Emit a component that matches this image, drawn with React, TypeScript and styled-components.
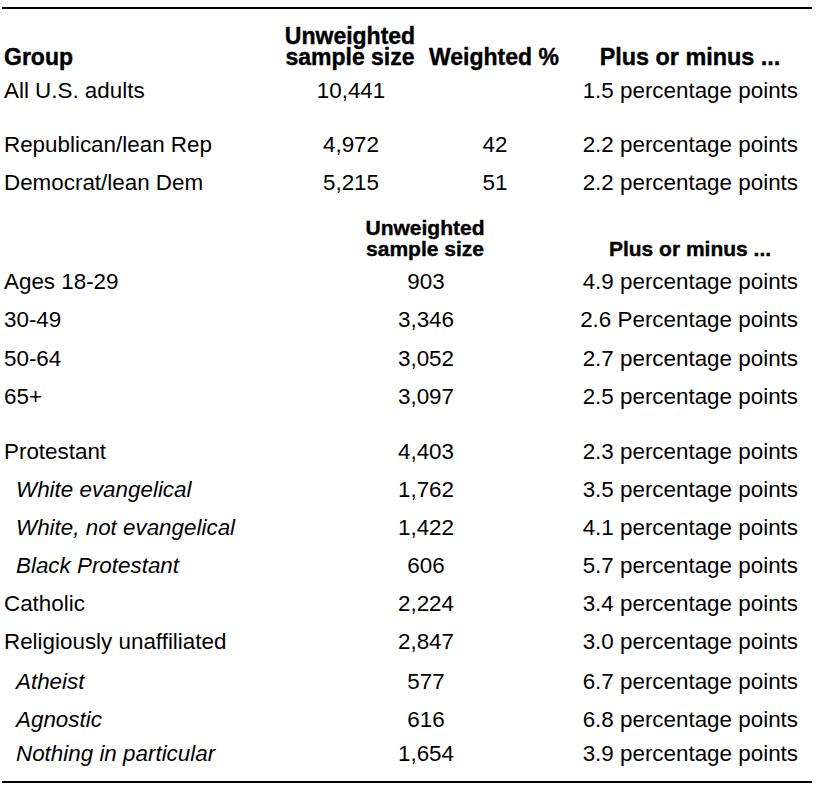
import React from "react";
import styled, { createGlobalStyle } from "styled-components";

const Global = createGlobalStyle`
  html, body { margin: 0; padding: 0; background: #ffffff; }
  body { font-family: "Liberation Sans", Arial, sans-serif; color: #000; }
`;

const Table = styled.div`
  width: 810px;
  margin: 7px 0 0 2px;
  border-top: 2px solid #000;
  border-bottom: 2px solid #000;
  padding-bottom: 8px;
`;

const Grid = styled.div<{ $cols: string }>`
  display: grid;
  grid-template-columns: ${(p) => p.$cols};
`;

const Head = styled.div<{ $size: number; $align?: string; $pt: number }>`
  font-weight: 700;
  font-size: ${(p) => p.$size}px;
  line-height: 21px;
  text-align: ${(p) => p.$align || "center"};
  padding: ${(p) => p.$pt}px 0 4px ${(p) => (p.$align === "left" ? 2 : 0)}px;
  display: flex;
  flex-direction: column;
  justify-content: flex-end;
  -webkit-text-stroke: 0.4px #000;
  white-space: nowrap;
`;

const Cell = styled.div<{ $align?: string; $italic?: boolean; $indent?: boolean; $gap?: number }>`
  font-size: 22.4px;
  line-height: 38px;
  height: 38px;
  margin-top: ${(p) => p.$gap || 0}px;
  text-align: ${(p) => p.$align || "center"};
  font-style: ${(p) => (p.$italic ? "italic" : "normal")};
  padding-left: ${(p) => (p.$indent ? 14 : 2)}px;
  padding-right: ${(p) => (p.$align === "right" ? 14 : 0)}px;
  white-space: nowrap;
  color: #000;
`;

type Row = { g: string; n: string; w?: string; pm: string; it?: boolean; gap?: number };

const top: Row[] = [
  { g: "All U.S. adults", n: "10,441", w: "", pm: "1.5 percentage points" },
  { g: "Republican/lean Rep", n: "4,972", w: "42", pm: "2.2 percentage points", gap: 16 },
  { g: "Democrat/lean Dem", n: "5,215", w: "51", pm: "2.2 percentage points" },
];

const bottom: Row[] = [
  { g: "Ages 18-29", n: "903", pm: "4.9 percentage points" },
  { g: "30-49", n: "3,346", pm: "2.6 Percentage points" },
  { g: "50-64", n: "3,052", pm: "2.7 percentage points", gap: 1 },
  { g: "65+", n: "3,097", pm: "2.5 percentage points" },
  { g: "Protestant", n: "4,403", pm: "2.3 percentage points", gap: 17 },
  { g: "White evangelical", n: "1,762", pm: "3.5 percentage points", it: true },
  { g: "White, not evangelical", n: "1,422", pm: "4.1 percentage points", it: true },
  { g: "Black Protestant", n: "606", pm: "5.7 percentage points", it: true },
  { g: "Catholic", n: "2,224", pm: "3.4 percentage points" },
  { g: "Religiously unaffiliated", n: "2,847", pm: "3.0 percentage points" },
  { g: "Atheist", n: "577", pm: "6.7 percentage points", it: true, gap: 2 },
  { g: "Agnostic", n: "616", pm: "6.8 percentage points", it: true },
  { g: "Nothing in particular", n: "1,654", pm: "3.9 percentage points", it: true, gap: -4 },
];

export default function App() {
  return (
    <>
      <Global />
      <Table>
        <Grid $cols="278px 140px 148px 244px">
          <Head $size={23} $align="left" $pt={17}>Group</Head>
          <Head $size={23} $pt={17}>
            <span>Unweighted</span>
            <span>sample size</span>
          </Head>
          <Head $size={23} $pt={17}>Weighted %</Head>
          <Head $size={23.4} $pt={17}>Plus or minus ...</Head>
          {top.map((r) => (
            <React.Fragment key={r.g}>
              <Cell $align="left" $gap={r.gap}>{r.g}</Cell>
              <Cell $gap={r.gap}>{r.n}</Cell>
              <Cell $gap={r.gap}>{r.w}</Cell>
              <Cell $align="right" $gap={r.gap}>{r.pm}</Cell>
            </React.Fragment>
          ))}
        </Grid>
        <Grid $cols="348px 150px 68px 244px">
          <Head $size={21} $align="left" $pt={15}></Head>
          <Head $size={21} $pt={15}>
            <span>Unweighted</span>
            <span>sample size</span>
          </Head>
          <Head $size={21} $pt={15}></Head>
          <Head $size={21} $pt={15}>Plus or minus ...</Head>
          {bottom.map((r) => (
            <React.Fragment key={r.g}>
              <Cell $align="left" $italic={r.it} $indent={r.it} $gap={r.gap}>{r.g}</Cell>
              <Cell $gap={r.gap}>{r.n}</Cell>
              <Cell $gap={r.gap}></Cell>
              <Cell $align="right" $gap={r.gap}>{r.pm}</Cell>
            </React.Fragment>
          ))}
        </Grid>
      </Table>
    </>
  );
}
